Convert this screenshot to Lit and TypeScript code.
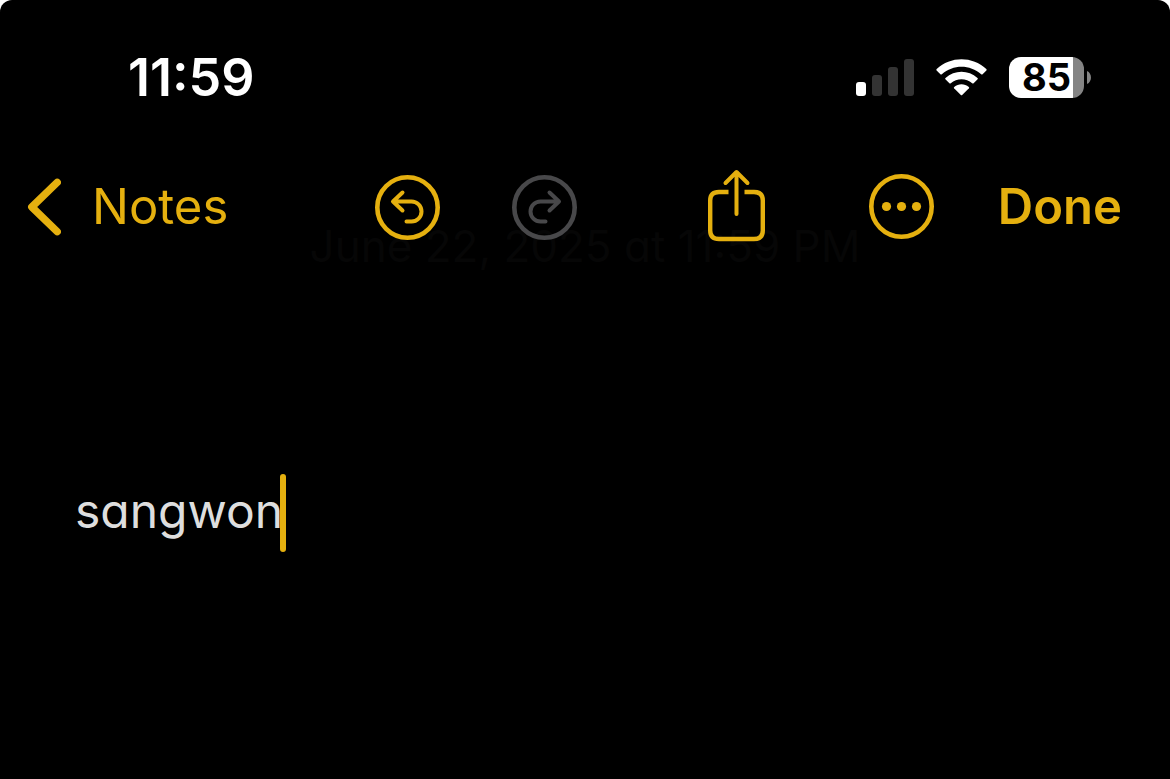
import { LitElement, html, css, svg } from "lit";
import { customElement, state } from "lit/decorators.js";

const SIGNAL_BARS = [14, 21, 29, 37];

@customElement("status-bar")
class StatusBar extends LitElement {
  static styles = css`
    :host {
      display: flex;
      align-items: center;
      justify-content: space-between;
      padding: 46px 79px 0 128px;
      color: #fff;
    }
    .time {
      padding-top: 2px;
      font-size: 52px;
      line-height: 60px;
      font-weight: 600;
    }
    .indicators {
      display: flex;
      align-items: center;
      gap: 22px;
    }
    svg {
      display: block;
    }
    .battery {
      display: flex;
      align-items: center;
      gap: 3px;
    }
    .cell {
      display: flex;
      justify-content: center;
      width: 75px;
      border-radius: 12px;
      background: linear-gradient(to right, #fff 64px, #848484 64px);
      color: #000;
      font-size: 38px;
      line-height: 41px;
      font-weight: 700;
    }
  `;

  render() {
    return html`
      <time class="time">11:59</time>
      <div class="indicators">
        <svg width="58" height="38" viewBox="0 0 58 38" role="img" aria-label="Signal">
          ${SIGNAL_BARS.map(
            (h, i) => svg`<rect x=${i * 16} y=${38 - h} width="10" height=${h} rx="3"
              fill=${i === 0 ? "#fff" : "#333"} />`
          )}
        </svg>
        <svg width="51" height="38" viewBox="0 -1.2 51 38" fill="#fff" role="img" aria-label="Wi-Fi">
          <path d="M0.6 11.2 Q0 10.5 0.7 9.8 C14.5 -3.3 36.500 -3.3 50.3 9.8 Q51 10.500 50.400 11.200 L46.600 15 Q45.900 15.600 45.200 15 C34 4.900 17 4.900 5.800 15 Q5.100 15.600 4.400 15 Z" />
          <path d="M9.400 20.100 Q8.800 19.400 9.500 18.800 C18.600 10.500 32.400 10.500 41.500 18.800 Q42.200 19.400 41.600 20.100 L37.600 24.100 Q36.900 24.700 36.200 24.100 C30.200 18.700 20.800 18.700 14.800 24.100 Q14.100 24.700 13.400 24.100 Z" />
          <path d="M18.100 29 Q17.500 28.300 18.200 27.700 C22.400 24.200 28.600 24.200 32.800 27.700 Q33.500 28.300 32.900 29 L26.200 35.800 Q25.500 36.500 24.800 35.800 Z" />
        </svg>
        <div class="battery">
          <span class="cell">85</span>
          <svg width="4" height="13" viewBox="0 0 4 13"><path d="M0 0 C5.300 2.200 5.300 10.800 0 13 Z" fill="#848484" /></svg>
        </div>
      </div>
    `;
  }
}

@customElement("note-toolbar")
class NoteToolbar extends LitElement {
  static styles = css`
    :host {
      position: relative;
      z-index: 1;
      display: flex;
      align-items: center;
      padding: 59px 48px 0 27px;
    }
    button {
      display: flex;
      align-items: center;
      margin: 0;
      padding: 0;
      border: 0;
      background: none;
      color: #e5b00f;
      font: inherit;
      font-size: 49px;
      line-height: 80px;
    }
    button:disabled {
      color: #48484a;
    }
    svg {
      display: block;
      fill: none;
      stroke: currentColor;
      stroke-linecap: round;
      stroke-linejoin: round;
    }
    .back {
      gap: 31px;
      margin-right: 16px;
    }
    .history {
      display: flex;
      gap: 72px;
      margin: 0 auto;
    }
    .actions {
      display: flex;
      align-items: center;
    }
    .share {
      margin-right: 104px;
    }
    .more {
      margin-right: 64px;
    }
    .done {
      font-weight: 600;
    }
  `;

  render() {
    return html`
      <button class="back">
        <svg width="34" height="58" viewBox="0 0 34 58" stroke-width="7.400"><path d="M30.200 4.400 L4.800 29 L30.200 53.600" /></svg>
        Notes
      </button>
      <div class="history">
        <button aria-label="Undo">
          <svg width="65" height="66" viewBox="0 0 65 66" stroke-width="4">
            <circle cx="32.500" cy="33.500" r="30.200" stroke-width="4.600" />
            <path d="M27.500 18.500 L18 27.500 L27.500 36.500 M18.500 27.500 H36.500 A10 10 0 0 1 36.500 47.500 H31.500" />
          </svg>
        </button>
        <button aria-label="Redo" disabled>
          <svg width="65" height="66" viewBox="0 0 65 66" stroke-width="4">
            <circle cx="32.500" cy="33.500" r="30.200" stroke-width="4.600" />
            <path d="M37.500 18.500 L47 27.500 L37.500 36.500 M46.500 27.500 H28.500 A10 10 0 0 0 28.500 47.500 H33.500" />
          </svg>
        </button>
      </div>
      <div class="actions">
        <button class="share" aria-label="Share">
          <svg width="57" height="76" viewBox="0 1.500 57 76" stroke-width="4">
            <path d="M20.500 24.500 H11 Q2.200 24.500 2.200 33 V63 Q2.200 71.500 11 71.500 H46 Q54.800 71.500 54.800 63 V33 Q54.800 24.500 46 24.500 H36.500" stroke-width="4.400" stroke-linecap="butt" />
            <path d="M28.500 46.500 V5 M17.500 15.500 L28.500 4.500 L39.500 15.500" />
          </svg>
        </button>
        <button class="more" aria-label="More">
          <svg width="65" height="66" viewBox="0 0 65 66">
            <circle cx="32.500" cy="32.500" r="30.200" stroke-width="4.600" />
            <g fill="currentColor" stroke="none">
              <circle cx="17.500" cy="32.500" r="4.600" />
              <circle cx="32.500" cy="32.500" r="4.600" />
              <circle cx="47.500" cy="32.500" r="4.600" />
            </g>
          </svg>
        </button>
        <button class="done">Done</button>
      </div>
    `;
  }
}

@customElement("app-root")
class AppRoot extends LitElement {
  @state() private text = "sangwon";

  static styles = css`
    :host {
      display: block;
      background: #fff;
      font-family: Inter, "Liberation Sans", sans-serif;
    }
    .screen {
      min-height: 100vh;
      border-radius: 12px 12px 0 0;
      background: #000;
    }
    .date {
      display: block;
      margin-top: -28px;
      text-align: center;
      color: #060606;
      font-size: 44px;
      line-height: 54px;
      font-feature-settings: "cv11";
    }
    .line {
      display: flex;
      align-items: center;
      padding: 201px 75px 0;
    }
    .body {
      field-sizing: content;
      min-width: 0;
      padding: 0 0 4px;
      border: 0;
      outline: 0;
      background: none;
      color: #dedede;
      caret-color: transparent;
      font: inherit;
      font-feature-settings: "cv11";
      font-size: 48px;
      line-height: 60px;
    }
    .caret {
      flex: none;
      width: 6px;
      height: 78px;
      margin-left: -3px;
      border-radius: 3px;
      background: #e5b00f;
    }
  `;

  private onInput(e: Event) {
    this.text = (e.target as HTMLInputElement).value;
  }

  render() {
    return html`
      <main class="screen">
        <status-bar></status-bar>
        <note-toolbar></note-toolbar>
        <time class="date">June 22, 2025 at 11:59 PM</time>
        <div class="line">
          <input class="body" aria-label="Note" spellcheck="false" .value=${this.text} @input=${this.onInput} />
          <span class="caret"></span>
        </div>
      </main>
    `;
  }
}
